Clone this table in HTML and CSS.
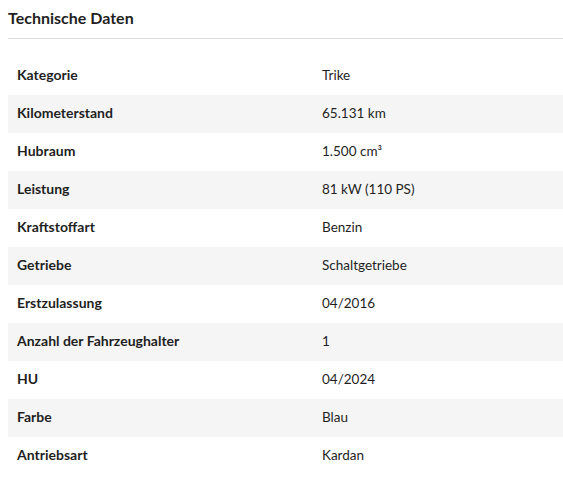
FILE: index.html
```html
<!DOCTYPE html>
<html lang="de">
<head>
<meta charset="utf-8">
<link rel="stylesheet" href="styles.css">
</head>
<body>
<section class="specs">
  <h2 class="specs-title">Technische Daten</h2>
  <table class="specs-table">
    <tbody>
      <tr><th>Kategorie</th><td>Trike</td></tr>
      <tr><th>Kilometerstand</th><td>65.131 km</td></tr>
      <tr><th>Hubraum</th><td>1.500 cm³</td></tr>
      <tr><th>Leistung</th><td>81 kW (110 PS)</td></tr>
      <tr><th>Kraftstoffart</th><td>Benzin</td></tr>
      <tr><th>Getriebe</th><td>Schaltgetriebe</td></tr>
      <tr><th>Erstzulassung</th><td>04/2016</td></tr>
      <tr><th>Anzahl der Fahrzeughalter</th><td>1</td></tr>
      <tr><th>HU</th><td>04/2024</td></tr>
      <tr><th>Farbe</th><td>Blau</td></tr>
      <tr><th>Antriebsart</th><td>Kardan</td></tr>
    </tbody>
  </table>
</section>
</body>
</html>
```
FILE: styles.css
```css
html, body {
  margin: 0;
  padding: 0;
  background: #fff;
}
body {
  font-family: Lato, "Open Sans", sans-serif;
  color: #1f1f1f;
  padding-left: 8px;
}
.specs-title {
  margin: 0;
  font-size: 16px;
  font-weight: 700;
  line-height: 18px;
  padding-top: 9px;
  padding-bottom: 11px;
  border-bottom: 1px solid #dcdcdc;
}
.specs-table {
  width: 100%;
  border-collapse: collapse;
  margin-top: 18px;
}
.specs-table tr {
  height: 38px;
}
.specs-table tr:nth-child(even) {
  background: #f5f5f5;
}
.specs-table th,
.specs-table td {
  padding: 0 9px 2px;
  text-align: left;
  vertical-align: middle;
}
.specs-table th {
  font-size: 14px;
  font-weight: 700;
  width: 287px;
  padding-bottom: 4px;
}
.specs-table td {
  font-size: 13.5px;
  font-weight: 400;
}
```
